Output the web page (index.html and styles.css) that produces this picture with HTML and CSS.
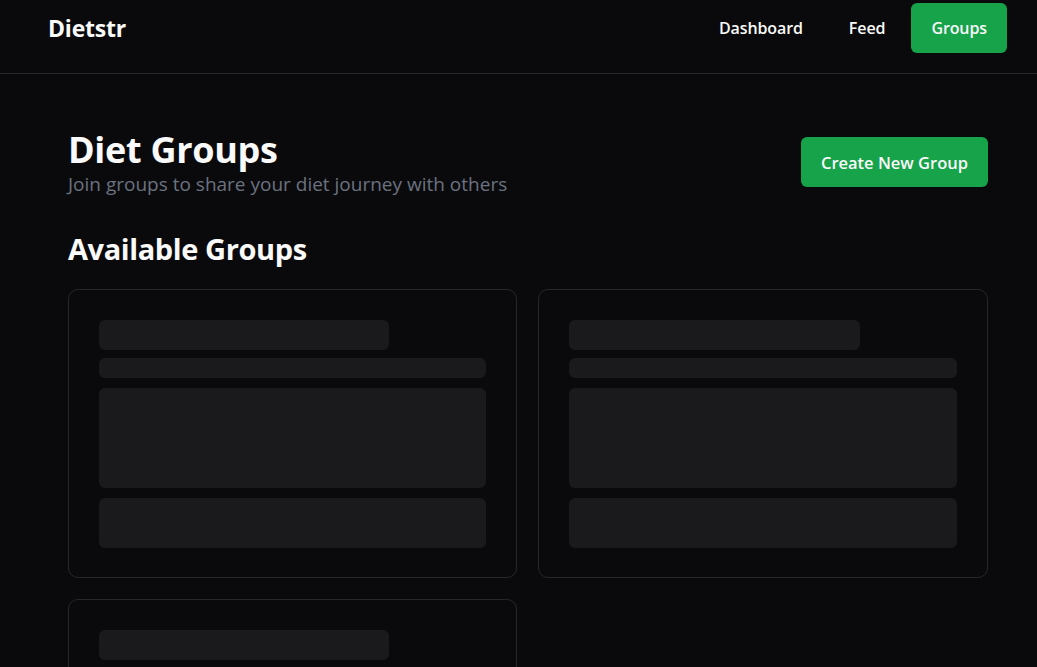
FILE: index.html
```html
<!DOCTYPE html>
<html lang="en">
<head>
<meta charset="utf-8">
<title>Dietstr - Groups</title>
<link rel="stylesheet" href="styles.css">
</head>
<body>
<header class="topbar">
  <div class="brand">Dietstr</div>
  <nav class="nav">
    <a class="nav-link" href="#">Dashboard</a>
    <a class="nav-link" href="#">Feed</a>
    <a class="nav-link active" href="#">Groups</a>
  </nav>
</header>
<main class="page">
  <section class="page-head">
    <div class="titles">
      <h1 class="title">Diet Groups</h1>
      <p class="subtitle">Join groups to share your diet journey with others</p>
    </div>
    <button class="btn-primary">Create New Group</button>
  </section>
  <h2 class="section-title">Available Groups</h2>
  <div class="grid">
    <div class="card">
      <div class="sk sk-title"></div>
      <div class="sk sk-line"></div>
      <div class="sk sk-body"></div>
      <div class="sk sk-foot"></div>
    </div>
    <div class="card">
      <div class="sk sk-title"></div>
      <div class="sk sk-line"></div>
      <div class="sk sk-body"></div>
      <div class="sk sk-foot"></div>
    </div>
    <div class="card">
      <div class="sk sk-title"></div>
      <div class="sk sk-line"></div>
      <div class="sk sk-body"></div>
      <div class="sk sk-foot"></div>
    </div>
  </div>
</main>
</body>
</html>
```
FILE: styles.css
```css
* { box-sizing: border-box; }
html, body { margin: 0; padding: 0; }
body {
  background: #0a0a0c;
  color: #fafafa;
  font-family: "Open Sans", "Noto Sans", sans-serif;
  overflow: hidden;
}
.topbar {
  height: 74px;
  border-bottom: 1px solid #27272a;
  display: flex;
  align-items: center;
  justify-content: space-between;
  padding: 3px 30px 20px 48px;
}
.brand {
  font-size: 23px;
  font-weight: 700;
  letter-spacing: -0.2px;
}
.nav { display: flex; gap: 6px; align-items: center; }
.nav-link {
  color: #fafafa;
  text-decoration: none;
  font-size: 16px;
  font-weight: 600;
  padding: 0 20px;
  height: 50px;
  line-height: 50px;
  border-radius: 6px;
  letter-spacing: -0.1px;
}
.nav-link.active { background: #16a34a; }
.page { padding: 54px 49px 0 68px; }
.page-head {
  display: flex;
  justify-content: space-between;
  align-items: flex-start;
}
.title {
  margin: 0;
  font-size: 36px;
  line-height: 44px;
  font-weight: 700;
  letter-spacing: -0.3px;
}
.subtitle {
  margin: 0;
  font-size: 19px;
  line-height: 24px;
  color: #6b7280;
  letter-spacing: 0;
}
.btn-primary {
  margin-top: 9px;
  background: #16a34a;
  color: #fafafa;
  border: 0;
  border-radius: 6px;
  height: 50px;
  padding: 0 20px;
  font-family: inherit;
  font-size: 16.5px;
  font-weight: 600;
  letter-spacing: 0;
}
.section-title {
  margin: 35px 0 22px;
  font-size: 29px;
  line-height: 36px;
  font-weight: 700;
  letter-spacing: -0.4px;
}
.grid {
  display: grid;
  grid-template-columns: 449px 1fr;
  gap: 21px;
}
.card {
  border: 1px solid #27272a;
  border-radius: 10px;
  padding: 30px 30px 29px;
  display: flex;
  flex-direction: column;
}
.sk { background: #1a1a1c; border-radius: 6px; }
.sk-title { width: 75%; height: 30px; }
.sk-line { height: 20px; margin-top: 8px; }
.sk-body { height: 100px; margin-top: 10px; }
.sk-foot { height: 50px; margin-top: 10px; }
```
